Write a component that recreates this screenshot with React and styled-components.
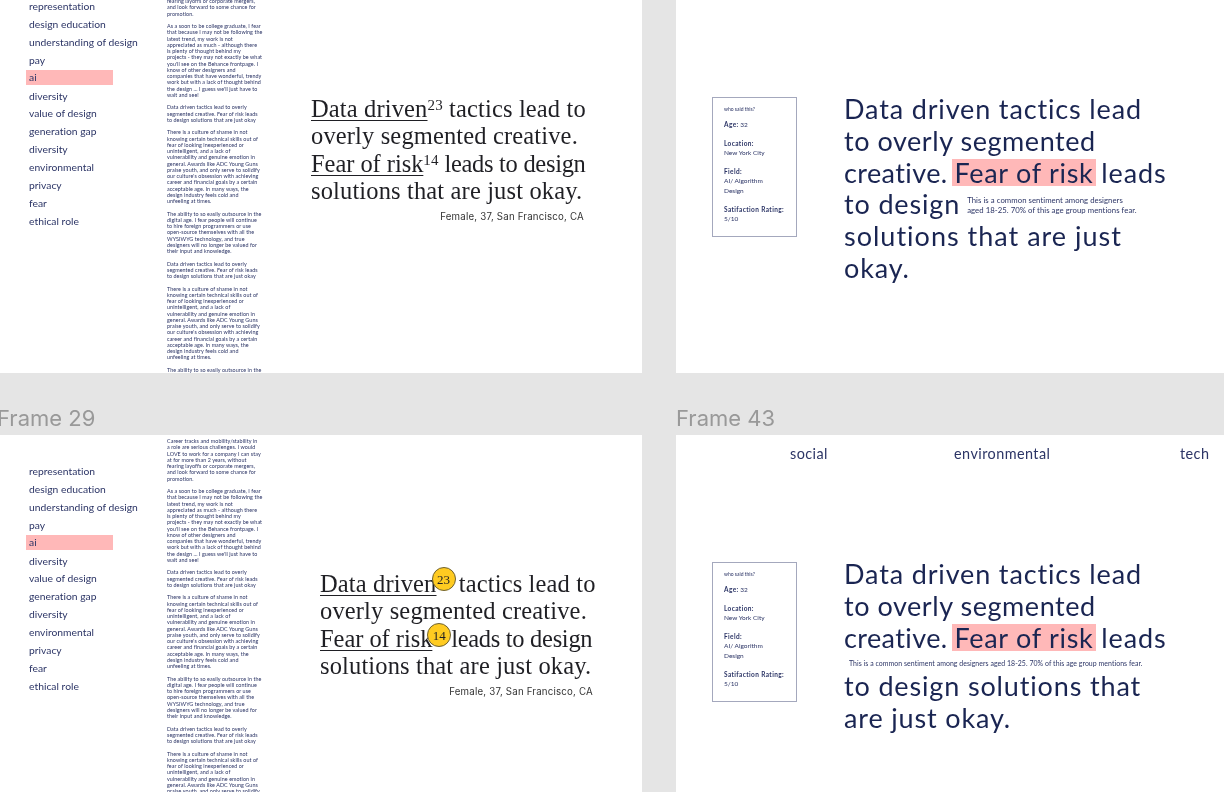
import React from "react";
import styled, { createGlobalStyle } from "styled-components";

const Global = createGlobalStyle`
  html, body { margin: 0; padding: 0; background: #e5e5e5; }
  body { width: 1224px; height: 792px; overflow: hidden; }
`;

const Canvas = styled.main`
  display: grid;
  grid-template-columns: 642px 548px;
  grid-template-rows: 373px 62px 357px;
  column-gap: 34px;
  width: 1224px;
  height: 792px;
  overflow: hidden;
  background: #e5e5e5;
  filter: blur(0.3px);
`;

const Frame = styled.section`
  background: #fff;
  overflow: hidden;
  min-width: 0;
  ${(p) => (p.$wide ? "width: 548px;" : "")}
`;

const FrameLabel = styled.div`
  align-self: end;
  height: 33px;
  margin-left: ${(p) => p.$shift || 0}px;
  font: 400 22px/32px Inter, Roboto, sans-serif;
  color: #999;
`;

const Board = styled.div`
  display: flex;
  margin-top: ${(p) => (p.$clipped ? -30 : 0)}px;
  height: 800px;
`;

const Nav = styled.ul`
  list-style: none;
  margin: 0;
  padding: 28px 0 0 26px;
  width: 167px;
  flex: none;
  box-sizing: border-box;
`;

const NavItem = styled.li`
  width: 87px;
  height: ${(p) => (p.$active ? 15.5 : 17.92)}px;
  margin: ${(p) => (p.$active ? "0 0 2.42px" : "0")};
  padding-left: 3px;
  box-sizing: border-box;
  font: 400 10.3px/${(p) => (p.$active ? 15.5 : 17.92)}px Lato, sans-serif;
  letter-spacing: 0.02px;
  white-space: nowrap;
  color: #2c3566;
  background: ${(p) => (p.$active ? "#ffb8b8" : "transparent")};
`;

const Copy = styled.div`
  width: 97px;
  flex: none;
  padding-top: 3px;
`;

const Para = styled.p`
  margin: 0 0 6.25px;
  font: 400 5.4px/6.25px Lato, sans-serif;
  letter-spacing: 0.06px;
  white-space: nowrap;
  color: #2c3566;
`;

const QuoteBlock = styled.figure`
  margin: ${(p) => p.$top}px 0 0 ${(p) => p.$left}px;
  width: 273px;
  flex: none;
`;

const Quote = styled.blockquote`
  margin: 0;
  font: 400 24.5px/27.33px "Liberation Serif", serif;
  letter-spacing: 0.14px;
  white-space: nowrap;
  color: #1f1f24;
`;

const Marked = styled.span`
  text-decoration: underline;
  text-decoration-thickness: 1px;
  text-underline-offset: 3px;
  letter-spacing: ${(p) => p.$track || 0.14}px;
`;

const Tracked = styled.span`
  letter-spacing: ${(p) => p.$track}px;
`;

const Sup = styled.sup`
  font-size: 15px;
  line-height: 0;
  vertical-align: 7px;
`;

const Badge = styled.span`
  display: inline-flex;
  align-items: center;
  justify-content: center;
  position: relative;
  top: ${(p) => p.$top || 0}px;
  width: 24px;
  height: 24px;
  margin: -6px ${(p) => p.$right}px -6px ${(p) => p.$left}px;
  box-sizing: border-box;
  border: 1px solid #6e6233;
  border-radius: 50%;
  background: #ffcb21;
  font: 400 13px/1 "Liberation Serif", serif;
  letter-spacing: 0;
  vertical-align: middle;
  color: #1f1f24;
`;

const Attribution = styled.figcaption`
  margin-top: 5.5px;
  text-align: right;
  font: 400 9.7px/14px Inter, sans-serif;
  letter-spacing: 0.2px;
  white-space: nowrap;
  color: #333;
`;

const RightBoard = styled.div`
  margin-top: ${(p) => (p.$clipped ? -30 : 0)}px;
`;

const Tabs = styled.div`
  display: grid;
  grid-template-columns: 164px 226px auto;
  height: 38px;
  padding-left: 114px;
  align-items: center;
`;

const Tab = styled.span`
  font: 400 14.4px/16px Lato, sans-serif;
  letter-spacing: 0.45px;
  color: #2c3566;
`;

const Row = styled.div`
  display: flex;
  align-items: flex-start;
  padding: ${(p) => p.$pad}px 0 0 36px;
`;

const Card = styled.aside`
  width: 85px;
  height: 140px;
  flex: none;
  margin: 4px 47px 0 0;
  padding: 8px 11px 0;
  box-sizing: border-box;
  border: 1px solid #a4a8bd;
  color: #2c3566;
`;

const CardTitle = styled.div`
  font: 400 5px/6px Lato, sans-serif;
  margin-bottom: 8px;
`;

const Fact = styled.div`
  font: 400 6.5px/9.35px Lato, sans-serif;
  margin-bottom: 9.5px;
  white-space: nowrap;
`;

const FactName = styled.strong`
  font-weight: 700;
  letter-spacing: 0.38px;
`;

const Statement = styled.div`
  font: 400 27px/31.8px Lato, sans-serif;
  letter-spacing: 0.85px;
  white-space: nowrap;
  color: #1a2552;
`;

const Highlight = styled.span`
  display: inline-block;
  height: 27px;
  line-height: 27px;
  margin: 0 -2px 0 -3px;
  padding: 0 2px;
  letter-spacing: 0.72px;
  background: #ffb8b8;
`;

const InlineNote = styled.span`
  display: inline-block;
  margin-left: 7px;
  vertical-align: 1px;
  font: 400 7.75px/10px Lato, sans-serif;
  letter-spacing: 0.05px;
  color: #2c3566;
`;

const BlockNote = styled.div`
  height: 17px;
  margin-left: 5px;
  font: 400 6.95px/20px Lato, sans-serif;
  letter-spacing: 0.05px;
  color: #2c3566;
`;

const topics = [
  "representation", "design education", "understanding of design", "pay", "ai",
  "diversity", "value of design", "generation gap", "diversity", "environmental",
  "privacy", "fear", "ethical role",
];

const career = ["Career tracks and mobility/stability in","a role are serious challenges. I would","LOVE to work for a company I can stay","at for more than 2 years, without","fearing layoffs or corporate mergers,","and look forward to some chance for","promotion."];
const graduate = ["As a soon to be college graduate, I fear","that because I may not be following the","latest trend, my work is not","appreciated as much - although there","is plenty of thought behind my","projects - they may not exactly be what","you'll see on the Behance frontpage. I","know of other designers and","companies that have wonderful, trendy","work but with a lack of thought behind","the design ... I guess we'll just have to","wait and see!"];
const tactics = ["Data driven tactics lead to overly","segmented creative. Fear of risk leads","to design solutions that are just okay"];
const shame = ["There is a culture of shame in not","knowing certain technical skills out of","fear of looking inexperienced or","unintelligent, and a lack of","vulnerability and genuine emotion in","general. Awards like ADC Young Guns","praise youth, and only serve to solidify","our culture's obsession with achieving","career and financial goals by a certain","acceptable age. In many ways, the","design industry feels cold and","unfeeling at times."];
const outsource = ["The ability to so easily outsource in the","digital age. I fear people will continue","to hire foreign programmers or use","open-source themselves with all the","WYSIWYG technology, and true","designers will no longer be valued for","their input and knowledge."];
const paragraphs = [career, graduate, tactics, shame, outsource, tactics, shame, outsource];

function Sidebar() {
  return (
    <>
      <Nav>
        {topics.map((t, i) => (
          <NavItem key={i} $active={t === "ai"}>{t}</NavItem>
        ))}
      </Nav>
      <Copy>
        {paragraphs.map((lines, i) => (
          <Para key={i}>
            {lines.map((l, j) => (
              <React.Fragment key={j}>{l}<br /></React.Fragment>
            ))}
          </Para>
        ))}
      </Copy>
    </>
  );
}

function Respondent() {
  return (
    <Card>
      <CardTitle>who said this?</CardTitle>
      <Fact><FactName>Age:</FactName> 32</Fact>
      <Fact><FactName>Location:</FactName><br />New York City</Fact>
      <Fact><FactName>Field:</FactName><br />AI/ Algorithm<br />Design</Fact>
      <Fact><FactName>Satifaction Rating:</FactName><br />5/10</Fact>
    </Card>
  );
}

export default function App() {
  return (
    <Canvas>
      <Global />
      <Frame>
        <Board $clipped>
          <Sidebar />
          <QuoteBlock $top={125} $left={47}>
            <Quote>
              <Marked>Data driven</Marked><Sup>23</Sup> tactics lead to<br />
              overly segmented creative.<br />
              <Marked $track={-0.05}>Fear of risk</Marked><Sup>14</Sup><Tracked $track={-0.3}> leads to design</Tracked><br />
              solutions that are just okay.
            </Quote>
            <Attribution>Female, 37, San Francisco, CA</Attribution>
          </QuoteBlock>
        </Board>
      </Frame>
      <Frame $wide>
        <RightBoard $clipped>
          <Row $pad={123}>
            <Respondent />
            <Statement>
              Data driven tactics lead<br />
              <Tracked $track={0.55}>to overly segmented</Tracked><br />
              <Tracked $track={0.4}>creative.</Tracked> <Highlight>Fear of risk</Highlight> leads<br />
              to design
              <InlineNote>
                This is a common sentiment among designers<br />
                aged 18-25. 70% of this age group mentions fear.
              </InlineNote><br />
              <Tracked $track={1}>solutions that are just</Tracked><br />
              okay.
            </Statement>
          </Row>
        </RightBoard>
      </Frame>
      <FrameLabel $shift={-3}>Frame 29</FrameLabel>
      <FrameLabel>Frame 43</FrameLabel>
      <Frame>
        <Board>
          <Sidebar />
          <QuoteBlock $top={135} $left={56}>
            <Quote>
              <Marked>Data driven</Marked><Badge $left={-5} $right={-3} $top={-7}>23</Badge> tactics lead to<br />
              overly segmented creative.<br />
              <Marked $track={-0.05}>Fear of risk</Marked><Badge $left={-5} $right={-6} $top={-6}>14</Badge><Tracked $track={-0.3}> leads to design</Tracked><br />
              solutions that are just okay.
            </Quote>
            <Attribution>Female, 37, San Francisco, CA</Attribution>
          </QuoteBlock>
        </Board>
      </Frame>
      <Frame $wide>
        <RightBoard>
          <Tabs>
            <Tab>social</Tab>
            <Tab>environmental</Tab>
            <Tab>tech</Tab>
          </Tabs>
          <Row $pad={85}>
            <Respondent />
            <Statement>
              Data driven tactics lead<br />
              <Tracked $track={0.55}>to overly segmented</Tracked><br />
              <Tracked $track={0.4}>creative.</Tracked> <Highlight>Fear of risk</Highlight> leads<br />
              <BlockNote>This is a common sentiment among designers aged 18-25. 70% of this age group mentions fear.</BlockNote>
              to design solutions that<br />
              are just okay.
            </Statement>
          </Row>
        </RightBoard>
      </Frame>
    </Canvas>
  );
}
